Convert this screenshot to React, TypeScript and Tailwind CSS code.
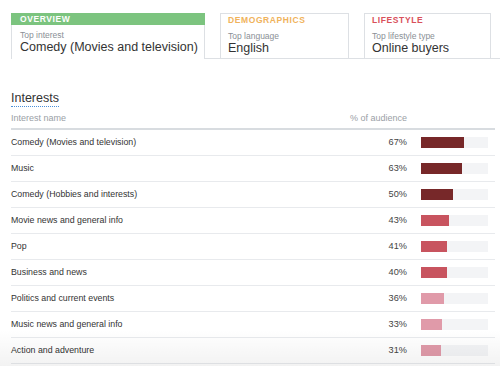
import React from 'react';

const rows = [
  { name: 'Comedy (Movies and television)', pct: 67 },
  { name: 'Music', pct: 63 },
  { name: 'Comedy (Hobbies and interests)', pct: 50 },
  { name: 'Movie news and general info', pct: 43 },
  { name: 'Pop', pct: 41 },
  { name: 'Business and news', pct: 40 },
  { name: 'Politics and current events', pct: 36 },
  { name: 'Music news and general info', pct: 33 },
  { name: 'Action and adventure', pct: 31 },
];

function barColor(pct: number) {
  if (pct >= 50) return 'bg-[#772829]';
  if (pct >= 40) return 'bg-[#c8545f]';
  return 'bg-[#e09aa9]';
}

function TabBody({ label, value }: { label: string; value: string }) {
  return (
    <div className="pl-[7px]">
      <div className="mt-[5px] text-[8.5px] leading-[10px] text-[#8a8f96]">{label}</div>
      <div className="text-[12.5px] leading-[14px] text-[#333]">{value}</div>
    </div>
  );
}

export default function App() {
  return (
    <div className="relative h-[366px] w-[500px] overflow-hidden bg-white font-['Liberation_Sans',Arial,sans-serif]">
      {/* tabs */}
      <div className="flex pl-[11px] pt-[13px]">
        <div className="h-[46px] w-[194px] border-x border-[#dde0e4]">
          <div className="-mx-px flex h-[12px] items-center bg-[#7cc47f] pl-[9px] text-[8.5px] font-bold tracking-[0.6px] text-white">
            OVERVIEW
          </div>
          <div className="pl-[1px]">
            <TabBody label="Top interest" value="Comedy (Movies and television)" />
          </div>
        </div>
        <div className="w-[15px] border-b border-[#dde0e4]" />
        <div className="h-[46px] w-[129px] border border-[#dde0e4]">
          <div className="flex h-[12px] items-center pl-[7px] text-[8.5px] font-bold tracking-[0.6px] text-[#f0b35c]">
            DEMOGRAPHICS
          </div>
          <TabBody label="Top language" value="English" />
        </div>
        <div className="w-[15px] border-b border-[#dde0e4]" />
        <div className="h-[46px] w-[127px] border border-[#dde0e4]">
          <div className="flex h-[12px] items-center pl-[7px] text-[8.5px] font-bold tracking-[0.6px] text-[#d9505b]">
            LIFESTYLE
          </div>
          <TabBody label="Top lifestyle type" value="Online buyers" />
        </div>
        <div className="flex-1 border-b border-[#dde0e4]" />
      </div>

      {/* interests table */}
      <div className="pl-[11px] pr-[5px] pt-[26px]">
        <div className="inline-block border-b-[1.5px] border-dotted border-[#4a90d9] text-[12.5px] leading-[15px] text-[#333]">
          Interests
        </div>
        <div className="mt-[3px] flex border-b-2 border-[#d8dce0] pb-[4px] text-[9px] leading-[12px] text-[#9aa0a6]">
          <div className="flex-1">Interest name</div>
          <div className="w-[60px] text-right">% of audience</div>
          <div className="w-[88px]" />
        </div>
        {rows.map((r) => (
          <div key={r.name} className="flex h-[26px] items-center border-b border-[#e8eaed] text-[8.8px] text-[#333]">
            <div className="flex-1">{r.name}</div>
            <div className="w-[60px] text-right text-[9.2px] text-[#444]">{r.pct}%</div>
            <div className="ml-[14px] w-[74px]">
              <div className="h-[11px] w-[67px] bg-[#f3f4f6]">
                <div className={`h-full ${barColor(r.pct)}`} style={{ width: `${r.pct * 0.645}px` }} />
              </div>
            </div>
          </div>
        ))}
      </div>

      {/* bottom fade */}
      <div className="pointer-events-none absolute bottom-0 left-0 right-0 h-[36px] bg-gradient-to-b from-transparent to-black/[0.05]" />
    </div>
  );
}
